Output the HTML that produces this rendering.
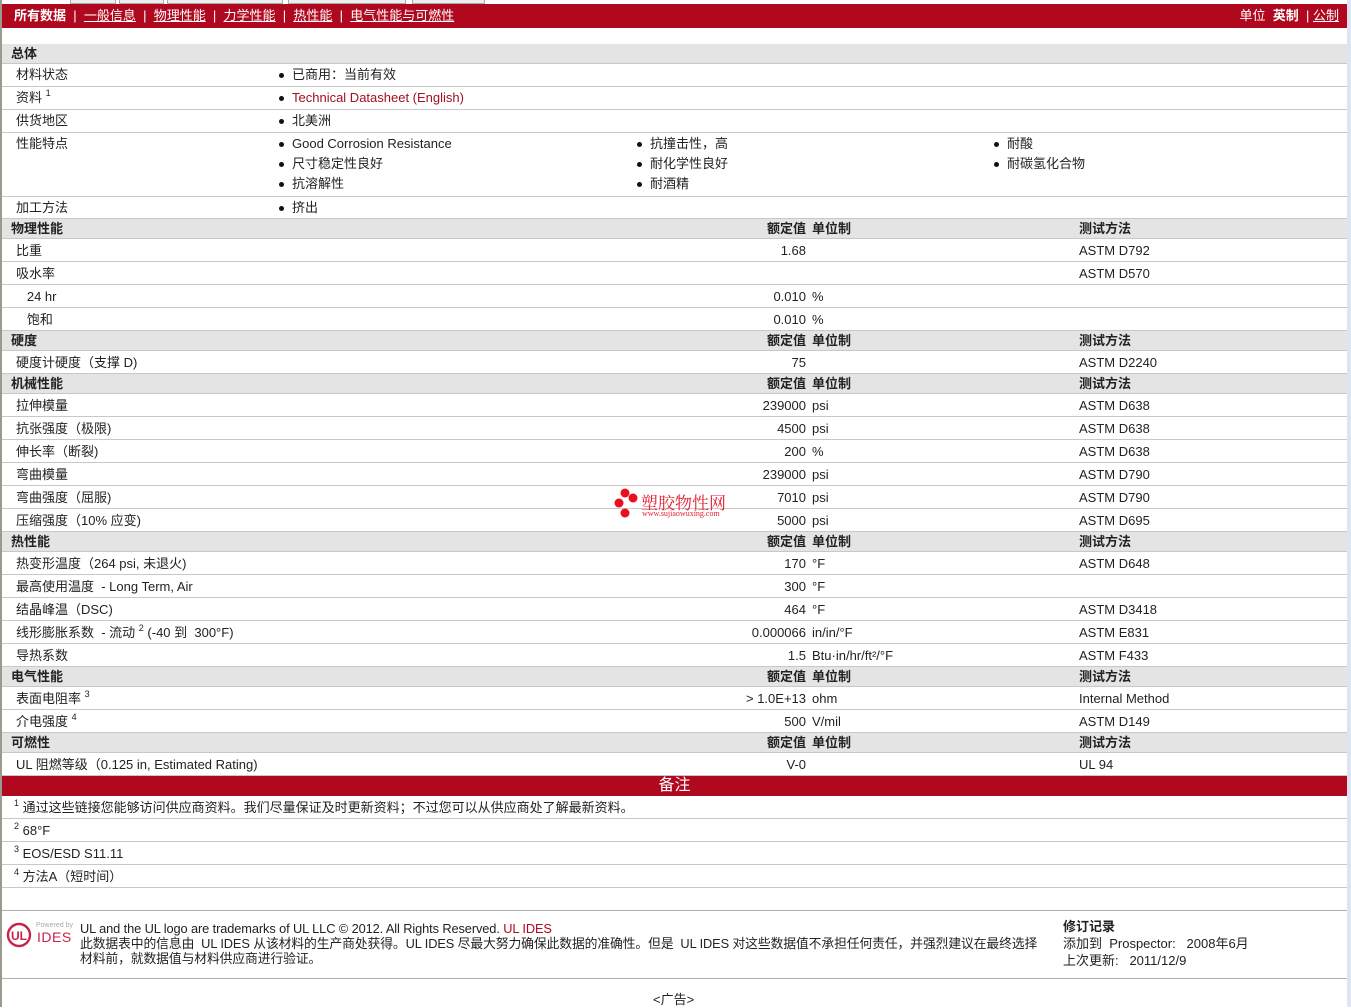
<!DOCTYPE html>
<html><head><meta charset="utf-8"><style>
*{margin:0;padding:0;box-sizing:border-box}
body{width:1351px;height:1007px;position:relative;background:#fff;font-family:"Liberation Sans","Noto Sans CJK SC",sans-serif;font-size:13px;color:#222;overflow:hidden}
.a{position:absolute;white-space:nowrap}
.row{position:absolute;left:2px;width:1345px;border-bottom:1px solid #c8c8c8}
.h{background:#e4e4e4;font-weight:bold;border-bottom:1px solid #c8c8c8}
.t{position:absolute;white-space:nowrap}
.b::before{content:"";position:absolute;left:-13px;top:50%;width:5px;height:5px;border-radius:50%;background:#111;margin-top:-2px}
.v{position:absolute;right:541px;white-space:nowrap;text-align:right}
sup{font-size:9px;vertical-align:6px;line-height:0}
</style></head><body>
<div class="a" style="left:0;top:0;width:2px;height:1007px;background:#9a9a8e"></div>
<div class="a" style="left:1347px;top:0;width:4px;height:1007px;background:#dde6f0"></div>
<div class="a" style="left:70px;top:0;width:46px;height:4px;border:1px solid #aaa;border-top:0;background:#eee"></div>
<div class="a" style="left:119px;top:0;width:45px;height:4px;border:1px solid #aaa;border-top:0;background:#eee"></div>
<div class="a" style="left:167px;top:0;width:116px;height:4px;border:1px solid #aaa;border-top:0;background:#eee"></div>
<div class="a" style="left:288px;top:0;width:118px;height:4px;border:1px solid #aaa;border-top:0;background:#eee"></div>
<div class="a" style="left:412px;top:0;width:73px;height:4px;border:1px solid #aaa;border-top:0;background:#eee"></div>
<div class="a" style="left:2px;top:4px;width:1345px;height:24px;background:#b0081f;color:#fff;font-size:13px;line-height:24px">
<span style="position:absolute;left:12px"><b>所有数据</b> &nbsp;| &nbsp;<u>一般信息</u> &nbsp;| &nbsp;<u>物理性能</u> &nbsp;| &nbsp;<u>力学性能</u> &nbsp;| &nbsp;<u>热性能</u> &nbsp;| &nbsp;<u>电气性能与可燃性</u></span>
<span style="position:absolute;right:8px">单位 &nbsp;<b>英制</b> &nbsp;| <u>公制</u></span></div>

<div class="row h" style="top:44px;height:20px;line-height:19px"><span class="t" style="left:9px">总体</span></div>
<div class="row" style="top:64px;height:23px;line-height:22px"><span class="t" style="left:14px">材料状态</span><span class="t b" style="left:290px">已商用：当前有效</span></div>
<div class="row" style="top:87px;height:23px;line-height:22px"><span class="t" style="left:14px">资料 <sup>1</sup></span><span class="t b" style="left:290px;color:#a01020">Technical Datasheet (English)</span></div>
<div class="row" style="top:110px;height:23px;line-height:22px"><span class="t" style="left:14px">供货地区</span><span class="t b" style="left:290px">北美洲</span></div>
<div class="row" style="top:133px;height:64px;line-height:20px">
<span class="t" style="left:14px;top:1px">性能特点</span>
<span class="t b" style="left:290px;top:1px">Good Corrosion Resistance</span><span class="t b" style="left:290px;top:21px">尺寸稳定性良好</span><span class="t b" style="left:290px;top:41px">抗溶解性</span>
<span class="t b" style="left:648px;top:1px">抗撞击性，高</span><span class="t b" style="left:648px;top:21px">耐化学性良好</span><span class="t b" style="left:648px;top:41px">耐酒精</span>
<span class="t b" style="left:1005px;top:1px">耐酸</span><span class="t b" style="left:1005px;top:21px">耐碳氢化合物</span></div>
<div class="row" style="top:197px;height:22px;line-height:21px"><span class="t" style="left:14px">加工方法</span><span class="t b" style="left:290px">挤出</span></div>

<div id="rows"></div>
<script>
var R=[
['h',219,'物理性能'],
['r',239,'比重','1.68','','ASTM D792'],
['r',262,'吸水率','','','ASTM D570'],
['r',285,'&nbsp;&nbsp;&nbsp;24 hr','0.010','%',''],
['r',308,'&nbsp;&nbsp;&nbsp;饱和','0.010','%',''],
['h',331,'硬度'],
['r',351,'硬度计硬度（支撑 D)','75','','ASTM D2240'],
['h',374,'机械性能'],
['r',394,'拉伸模量','239000','psi','ASTM D638'],
['r',417,'抗张强度（极限)','4500','psi','ASTM D638'],
['r',440,'伸长率（断裂)','200','%','ASTM D638'],
['r',463,'弯曲模量','239000','psi','ASTM D790'],
['r',486,'弯曲强度（屈服)','7010','psi','ASTM D790'],
['r',509,'压缩强度（10% 应变)','5000','psi','ASTM D695'],
['h',532,'热性能'],
['r',552,'热变形温度（264 psi, 未退火)','170','°F','ASTM D648'],
['r',575,'最高使用温度 &nbsp;- Long Term, Air','300','°F',''],
['r',598,'结晶峰温（DSC)','464','°F','ASTM D3418'],
['r',621,'线形膨胀系数 &nbsp;- 流动 <sup>2</sup> (-40 到 &nbsp;300°F)','0.000066','in/in/°F','ASTM E831'],
['r',644,'导热系数','1.5','Btu·in/hr/ft²/°F','ASTM F433'],
['h',667,'电气性能'],
['r',687,'表面电阻率 <sup>3</sup>','&gt; 1.0E+13','ohm','Internal Method'],
['r',710,'介电强度 <sup>4</sup>','500','V/mil','ASTM D149'],
['h',733,'可燃性'],
['r',753,'UL 阻燃等级（0.125 in, Estimated Rating)','V-0','','UL 94']];
var s='';
R.forEach(function(r){
if(r[0]=='h'){s+='<div class="row h" style="top:'+r[1]+'px;height:20px;line-height:19px"><span class="t" style="left:9px">'+r[2]+'</span><span class="v">额定值</span><span class="t" style="left:810px">单位制</span><span class="t" style="left:1077px">测试方法</span></div>';}
else{s+='<div class="row" style="top:'+r[1]+'px;height:23px;line-height:23px"><span class="t" style="left:14px">'+r[2]+'</span><span class="v">'+r[3]+'</span><span class="t" style="left:810px">'+r[4]+'</span><span class="t" style="left:1077px">'+r[5]+'</span></div>';}
});
document.getElementById('rows').outerHTML=s;
</script>

<div class="a" style="left:2px;top:776px;width:1345px;height:20px;background:#b0081f;color:#fff;font-size:16px;line-height:19px;text-align:center">备注</div>
<div class="row" style="top:796px;height:23px;line-height:24px"><span class="t" style="left:12px"><sup>1</sup> 通过这些链接您能够访问供应商资料。我们尽量保证及时更新资料；不过您可以从供应商处了解最新资料。</span></div>
<div class="row" style="top:819px;height:23px;line-height:24px"><span class="t" style="left:12px"><sup>2</sup> 68°F</span></div>
<div class="row" style="top:842px;height:23px;line-height:24px"><span class="t" style="left:12px"><sup>3</sup> EOS/ESD S11.11</span></div>
<div class="row" style="top:865px;height:23px;line-height:24px"><span class="t" style="left:12px"><sup>4</sup> 方法A（短时间）</span></div>

<div class="a" style="left:2px;top:910px;width:1345px;height:1px;background:#b0b0b0"></div>
<div class="a" style="left:2px;top:978px;width:1345px;height:1px;background:#b0b0b0"></div>
<svg class="a" style="left:6px;top:921px" width="30" height="30" viewBox="0 0 30 30"><circle cx="13" cy="14" r="11" fill="none" stroke="#c8234a" stroke-width="2.4"/><text x="13" y="19" font-size="12" font-weight="bold" fill="#c8234a" text-anchor="middle" font-family="Liberation Sans">UL</text></svg>
<div class="a" style="left:36px;top:922px;font-size:7px;color:#aaa">Powered by</div>
<div class="a" style="left:37px;top:929px;font-size:14px;color:#c8234a;letter-spacing:0.5px">IDES</div>
<div class="a" style="left:80px;top:921px;line-height:15px;font-size:12.8px;letter-spacing:-0.1px">UL and the UL logo are trademarks of UL LLC © 2012. All Rights Reserved. <span style="color:#b0081f">UL IDES</span><br>此数据表中的信息由 &nbsp;UL IDES 从该材料的生产商处获得。UL IDES 尽最大努力确保此数据的准确性。但是 &nbsp;UL IDES 对这些数据值不承担任何责任，并强烈建议在最终选择<br>材料前，就数据值与材料供应商进行验证。</div>
<div class="a" style="left:1063px;top:918px;line-height:17px"><b>修订记录</b><br>添加到 &nbsp;Prospector: &nbsp;&nbsp;2008年6月<br>上次更新: &nbsp;&nbsp;2011/12/9</div>
<div class="a" style="left:653px;top:989px">&lt;广告&gt;</div>

<div class="a" style="left:613px;top:487px">
<svg width="26" height="34" viewBox="0 0 26 34"><circle cx="12" cy="6" r="4.5" fill="#e8101e"/><circle cx="20" cy="11" r="4.5" fill="#e8101e"/><circle cx="6" cy="16" r="4.5" fill="#e8101e"/><circle cx="12" cy="26" r="4.5" fill="#e8101e"/></svg></div>
<div class="a" style="left:641px;top:489px;font-size:17px;color:#e22030;font-family:'Noto Serif CJK SC',serif">塑胶物性网</div>
<div class="a" style="left:642px;top:509px;font-size:8px;color:#e22030;font-family:'Liberation Serif',serif">www.sujiaowuxing.com</div>
</body></html>
